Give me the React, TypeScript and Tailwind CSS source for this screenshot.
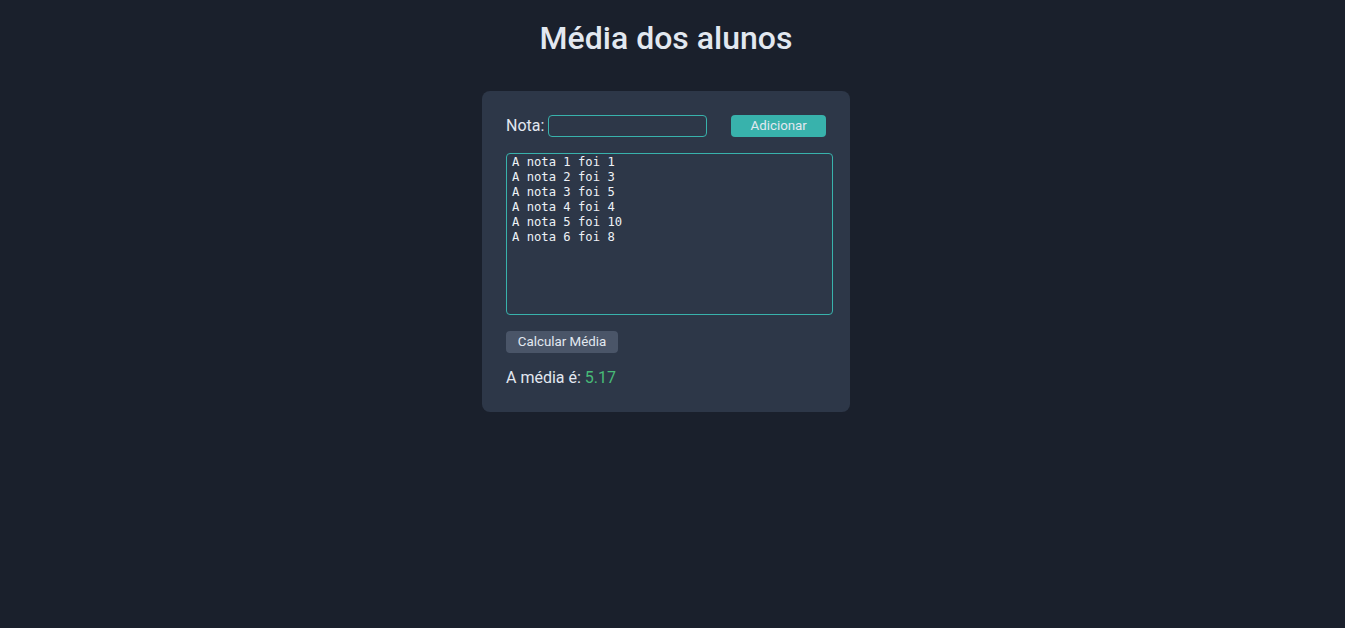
import React from "react";

const notas = [1, 3, 5, 4, 10, 8];

function App() {
  const media = (notas.reduce((a, b) => a + b, 0) / notas.length).toFixed(2);
  return (
    <div className="min-h-screen bg-[#1a202c] text-[#e2e8f0] font-['Roboto',sans-serif] pr-[13px] pt-[16px]">
      <h1 className="text-center text-[32px] leading-[44px] font-medium">Média dos alunos</h1>
      <div className="mx-auto mt-[31px] w-[368px] rounded-lg bg-[#2d3748] p-6">
        <div className="flex items-center">
          <label className="text-[16px] leading-[22px] mr-[4px]">Nota:</label>
          <input className="h-[22px] w-[159px] rounded border border-[#38b2ac] bg-transparent outline-none" />
          <button className="ml-6 h-[22px] w-[95px] rounded bg-[#38b2ac] text-[13.33px] text-[#e2e8f0]">Adicionar</button>
        </div>
        <textarea
          readOnly
          className="mt-4 block h-[162px] w-[327px] resize-none rounded-sm border border-[#38b2ac] bg-transparent px-[5px] py-[1px] font-['DejaVu_Sans_Mono',monospace] text-[12.2px] leading-[15px] text-[#edf2f7] outline-none"
          value={notas.map((n, i) => `A nota ${i + 1} foi ${n}`).join("\n")}
        />
        <button className="mt-4 h-[22px] w-[112px] rounded bg-[#4a5568] text-[13.33px] text-[#e2e8f0]">Calcular Média</button>
        <p className="mt-[14px] text-[16px] leading-[21px]">
          A média é: <span className="text-[#48bb78]">{media}</span>
        </p>
      </div>
    </div>
  );
}

export default App;
